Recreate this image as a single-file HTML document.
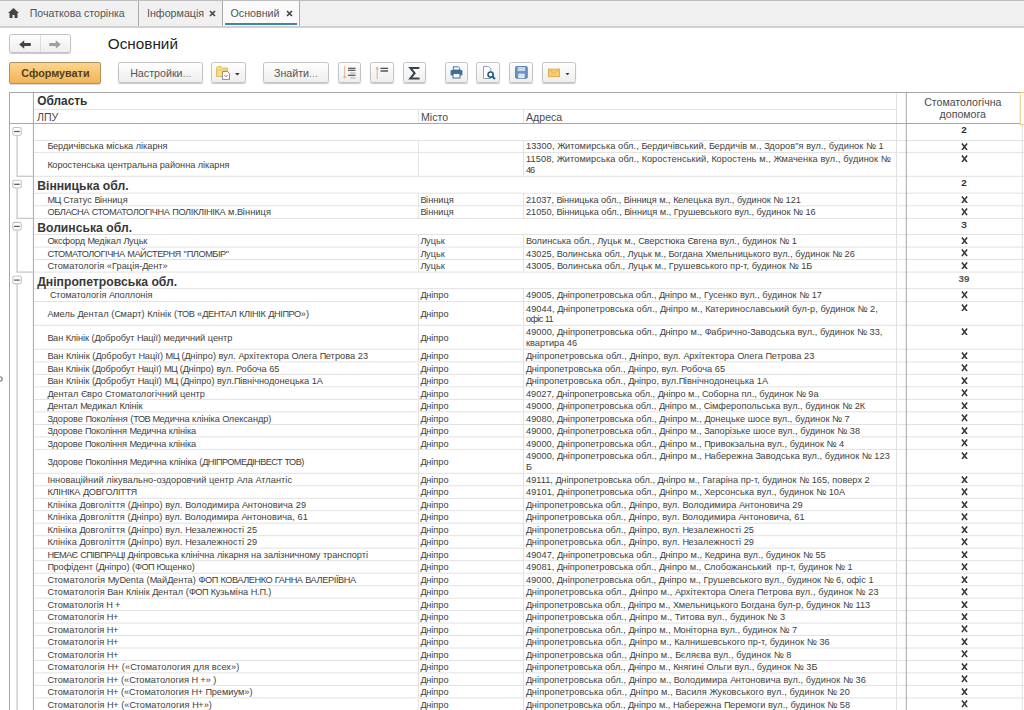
<!DOCTYPE html>
<html><head><meta charset="utf-8"><style>
html,body{margin:0;padding:0;background:#fff;}
body{width:1024px;height:710px;overflow:hidden;position:relative;font-family:"Liberation Sans",sans-serif;}
body div{position:absolute;overflow:visible;white-space:nowrap;}
.btn{border:1px solid #c4c4c4;border-radius:2.5px;background:linear-gradient(#fefefe,#eeeeee);box-shadow:0 1px 1px rgba(0,0,0,0.22);box-sizing:border-box}
</style></head><body>
<div style="left:0;top:0;width:1024px;height:27.8px;background:#f0f0f0;border-top:1px solid #bdbdbd;border-bottom:2px solid #d0d0d0;box-sizing:border-box"></div>
<div style="left:221.7px;top:1px;width:77.7px;height:24.8px;background:#fafafa"></div>
<div style="left:138px;top:1px;width:1px;height:25px;background:#ababab"></div>
<div style="left:221.5px;top:1px;width:1px;height:25px;background:#ababab"></div>
<div style="left:299px;top:1px;width:1px;height:25px;background:#ababab"></div>
<div style="left:225px;top:23.2px;width:71.5px;height:1.8px;background:#3f87a8"></div>
<div style="left:29.7px;top:5.2px;font-size:10.6px;line-height:16px;color:#555">Початкова сторінка</div>
<div style="left:147px;top:5.2px;font-size:10.7px;line-height:16px;color:#555">Інформація</div>
<div style="left:230.5px;top:5.2px;font-size:10.7px;line-height:16px;color:#555">Основний</div>
<svg style="position:absolute;left:8.2px;top:7.6px" width="11" height="10" viewBox="0 0 11 10"><path d="M5.5 0 L11 5 L9.5 5 L9.5 10 L6.5 10 L6.5 7 L4.5 7 L4.5 10 L1.5 10 L1.5 5 L0 5 Z" fill="#444"/></svg>
<svg style="position:absolute;left:208.8px;top:9.5px" width="7" height="7" viewBox="0 0 7 7"><path d="M1 1 L6 6 M6 1 L1 6" stroke="#444" stroke-width="1.6"/></svg>
<svg style="position:absolute;left:285.8px;top:9.5px" width="7" height="7" viewBox="0 0 7 7"><path d="M1 1 L6 6 M6 1 L1 6" stroke="#444" stroke-width="1.6"/></svg>

<div style="left:107.8px;top:34.8px;font-size:15.3px;line-height:18px;color:#1e1e1e">Основний</div>

<div class="btn" style="left:9.4px;top:34.4px;width:61.3px;height:19.1px"></div>
<div style="left:40.2px;top:35.4px;width:1px;height:17.1px;background:#dedede"></div>
<svg style="position:absolute;left:19px;top:40px" width="12" height="9" viewBox="0 0 12 9"><path d="M0.2 4.5 L5.2 0.2 L5.2 3.1 L11.8 3.1 L11.8 5.9 L5.2 5.9 L5.2 8.8 Z" fill="#444"/></svg>
<svg style="position:absolute;left:49px;top:40px" width="12" height="9" viewBox="0 0 12 9"><path d="M11.8 4.5 L6.8 0.2 L6.8 3.1 L0.2 3.1 L0.2 5.9 L6.8 5.9 L6.8 8.8 Z" fill="#a0a0a0"/></svg>

<div style="left:9.4px;top:62.2px;width:92px;height:21.5px;border:1px solid #b0925c;border-radius:2px;background:linear-gradient(#fdd48e,#f0b456);box-shadow:0 1px 1px rgba(0,0,0,0.15);box-sizing:border-box"></div>
<div style="left:9.4px;top:62.2px;width:92px;height:21.5px;font-weight:bold;font-size:10.8px;line-height:23.5px;color:#54401a;text-align:center">Сформувати</div>

<div class="btn" style="left:118.3px;top:62.3px;width:85px;height:21.2px;font-size:10.7px;line-height:20px;color:#555;text-align:center">Настройки<span style="color:#8a8a8a">...</span></div>
<div class="btn" style="left:210.5px;top:62.3px;width:35.2px;height:21.2px"></div>
<div class="btn" style="left:262.6px;top:62.3px;width:66.8px;height:21.2px;font-size:10.7px;line-height:20px;color:#555;text-align:center">Знайти<span style="color:#8a8a8a">...</span></div>
<div class="btn" style="left:337.6px;top:62.3px;width:23.7px;height:21.2px"></div>
<div class="btn" style="left:370.2px;top:62.3px;width:24.1px;height:21.2px"></div>
<div class="btn" style="left:402.5px;top:62.3px;width:23.8px;height:21.2px"></div>
<div class="btn" style="left:444.5px;top:62.3px;width:23.9px;height:21.2px"></div>
<div class="btn" style="left:476.4px;top:62.3px;width:23.8px;height:21.2px"></div>
<div class="btn" style="left:508.9px;top:62.3px;width:23.9px;height:21.2px"></div>
<div class="btn" style="left:541.6px;top:62.3px;width:34px;height:21.2px"></div>

<!-- report options icon -->
<svg style="position:absolute;left:215px;top:65px" width="28" height="16" viewBox="0 0 28 16">
<path d="M1.5 3.5 Q1.5 1.5 3.5 1.5 L6 1.5 L7.5 3 L12.5 3 L12.5 11.5 L1.5 11.5 Z" fill="#f7dc83" stroke="#e2bd55" stroke-width="1"/>
<path d="M1.5 5 L12.5 5" stroke="#e9c867" stroke-width="1"/>
<path d="M7.5 6.5 L12.5 6.5 L14.5 8.5 L14.5 14.5 L7.5 14.5 Z" fill="#fff" stroke="#7d8796" stroke-width="0.9"/>
<path d="M9.5 10 L11 11.8 L12.5 10" stroke="#d46a5a" stroke-width="1" fill="none"/>
<path d="M20 8 L24.6 8 L22.3 10.5 Z" fill="#333"/>
</svg>
<!-- sort desc -->
<svg style="position:absolute;left:341px;top:65px" width="18" height="16" viewBox="0 0 18 16">
<path d="M3.7 1 L3.7 12" stroke="#eab08e" stroke-width="1"/>
<path d="M1.9 11 L3.7 14 L5.5 11 Z" fill="#eab08e"/>
<path d="M7 3.3 L14.5 3.3 M7 5.2 L14.5 5.2 M7 10.3 L14.5 10.3" stroke="#333" stroke-width="1.1"/>
<path d="M9 8 L14.5 8 M9 13 L14.5 13" stroke="#aaa" stroke-width="1"/>
</svg>
<!-- sort asc -->
<svg style="position:absolute;left:373px;top:65px" width="18" height="16" viewBox="0 0 18 16">
<path d="M4.2 3 L4.2 14" stroke="#e4ab88" stroke-width="1"/>
<path d="M2.4 4.2 L4.2 1.2 L6 4.2 Z" fill="#e4ab88"/>
<path d="M7.5 3.3 L15 3.3" stroke="#333" stroke-width="1.1"/>
<path d="M7.5 6 L15 6" stroke="#555" stroke-width="1.5"/>
</svg>
<!-- sigma -->
<svg style="position:absolute;left:407px;top:65px" width="14" height="16" viewBox="0 0 14 16">
<path d="M11.6 3.6 L11.6 2.9 L3.3 2.9 L7.6 8.2 L3.3 13.4 L11.6 13.4 L11.6 12.7" stroke="#38424d" stroke-width="2" fill="none" stroke-linejoin="miter"/>
</svg>
<!-- printer -->
<svg style="position:absolute;left:449.8px;top:66.2px" width="13" height="13" viewBox="0 0 13 13">
<path d="M3.3 0.8 L8.3 0.8 L9.8 2.2 L9.8 4 L3.3 4 Z" fill="#fff" stroke="#3f6f96" stroke-width="1"/>
<rect x="0.6" y="4" width="11.8" height="5.6" rx="1.1" fill="#3f6f96"/>
<rect x="3" y="7.6" width="7" height="4.4" fill="#fff" stroke="#3f6f96" stroke-width="1"/>
</svg>
<!-- preview -->
<svg style="position:absolute;left:482px;top:65px" width="15" height="15" viewBox="0 0 15 15">
<path d="M1.5 1.5 L6.5 1.5 L8.8 3.8 L8.8 13.5 L1.5 13.5 Z" fill="#fff" stroke="#8a96a6" stroke-width="0.9"/>
<circle cx="8.6" cy="9.6" r="2.6" fill="#fff" stroke="#1f5c7d" stroke-width="1.6"/>
<path d="M10.4 11.5 L13 14" stroke="#1f5c7d" stroke-width="2"/>
</svg>
<!-- floppy -->
<svg style="position:absolute;left:514.5px;top:66.3px" width="13" height="13" viewBox="0 0 13 13">
<rect x="0.5" y="0.5" width="11.8" height="11.8" rx="1" fill="#6a93bf" stroke="#4f78a6" stroke-width="0.8"/>
<rect x="2.6" y="1.1" width="7.6" height="4" fill="#c9d9ea"/>
<rect x="3.2" y="7.6" width="6.4" height="4.4" fill="#dbe6f1"/>
</svg>
<!-- mail -->
<svg style="position:absolute;left:546px;top:66px" width="28" height="13" viewBox="0 0 28 13">
<rect x="2.4" y="3.1" width="11" height="7.6" fill="#f5cd6a" stroke="#dba94a" stroke-width="0.9"/>
<path d="M2.7 3.4 L7.9 7.4 L13.1 3.4" stroke="#e2b154" stroke-width="0.9" fill="none"/>
<path d="M19.5 7 L23.5 7 L21.5 9.2 Z" fill="#333"/>
</svg>

<div style="left:1020.30px;top:92.50px;width:5.70px;height:32.50px;background:#fffdf8"></div>
<svg style="position:absolute;left:0;top:0" width="1024" height="710" viewBox="0 0 1024 710"><path d="M33.40 140.50H1024.00" stroke="#e2e2e2" stroke-width="1.0"/><path d="M418.40 140.50V152.40" stroke="#e2e2e2" stroke-width="1.0"/><path d="M523.50 140.50V152.40" stroke="#e2e2e2" stroke-width="1.0"/><path d="M33.40 152.40H1024.00" stroke="#e2e2e2" stroke-width="1.0"/><path d="M418.40 152.40V176.30" stroke="#e2e2e2" stroke-width="1.0"/><path d="M523.50 152.40V176.30" stroke="#e2e2e2" stroke-width="1.0"/><path d="M33.40 176.30H1024.00" stroke="#e2e2e2" stroke-width="1.0"/><path d="M33.40 193.20H1024.00" stroke="#e2e2e2" stroke-width="1.0"/><path d="M418.40 193.20V205.80" stroke="#e2e2e2" stroke-width="1.0"/><path d="M523.50 193.20V205.80" stroke="#e2e2e2" stroke-width="1.0"/><path d="M33.40 205.80H1024.00" stroke="#e2e2e2" stroke-width="1.0"/><path d="M418.40 205.80V218.40" stroke="#e2e2e2" stroke-width="1.0"/><path d="M523.50 205.80V218.40" stroke="#e2e2e2" stroke-width="1.0"/><path d="M33.40 218.40H1024.00" stroke="#e2e2e2" stroke-width="1.0"/><path d="M33.40 234.50H1024.00" stroke="#e2e2e2" stroke-width="1.0"/><path d="M418.40 234.50V247.10" stroke="#e2e2e2" stroke-width="1.0"/><path d="M523.50 234.50V247.10" stroke="#e2e2e2" stroke-width="1.0"/><path d="M33.40 247.10H1024.00" stroke="#e2e2e2" stroke-width="1.0"/><path d="M418.40 247.10V259.50" stroke="#e2e2e2" stroke-width="1.0"/><path d="M523.50 247.10V259.50" stroke="#e2e2e2" stroke-width="1.0"/><path d="M33.40 259.50H1024.00" stroke="#e2e2e2" stroke-width="1.0"/><path d="M418.40 259.50V272.10" stroke="#e2e2e2" stroke-width="1.0"/><path d="M523.50 259.50V272.10" stroke="#e2e2e2" stroke-width="1.0"/><path d="M33.40 272.10H1024.00" stroke="#e2e2e2" stroke-width="1.0"/><path d="M33.40 288.70H1024.00" stroke="#e2e2e2" stroke-width="1.0"/><path d="M418.40 288.70V301.60" stroke="#e2e2e2" stroke-width="1.0"/><path d="M523.50 288.70V301.60" stroke="#e2e2e2" stroke-width="1.0"/><path d="M33.40 301.60H1024.00" stroke="#e2e2e2" stroke-width="1.0"/><path d="M418.40 301.60V325.30" stroke="#e2e2e2" stroke-width="1.0"/><path d="M523.50 301.60V325.30" stroke="#e2e2e2" stroke-width="1.0"/><path d="M33.40 325.30H1024.00" stroke="#e2e2e2" stroke-width="1.0"/><path d="M418.40 325.30V349.20" stroke="#e2e2e2" stroke-width="1.0"/><path d="M523.50 325.30V349.20" stroke="#e2e2e2" stroke-width="1.0"/><path d="M33.40 349.20H1024.00" stroke="#e2e2e2" stroke-width="1.0"/><path d="M418.40 349.20V361.90" stroke="#e2e2e2" stroke-width="1.0"/><path d="M523.50 349.20V361.90" stroke="#e2e2e2" stroke-width="1.0"/><path d="M33.40 361.90H1024.00" stroke="#e2e2e2" stroke-width="1.0"/><path d="M418.40 361.90V374.40" stroke="#e2e2e2" stroke-width="1.0"/><path d="M523.50 361.90V374.40" stroke="#e2e2e2" stroke-width="1.0"/><path d="M33.40 374.40H1024.00" stroke="#e2e2e2" stroke-width="1.0"/><path d="M418.40 374.40V386.90" stroke="#e2e2e2" stroke-width="1.0"/><path d="M523.50 374.40V386.90" stroke="#e2e2e2" stroke-width="1.0"/><path d="M33.40 386.90H1024.00" stroke="#e2e2e2" stroke-width="1.0"/><path d="M418.40 386.90V399.40" stroke="#e2e2e2" stroke-width="1.0"/><path d="M523.50 386.90V399.40" stroke="#e2e2e2" stroke-width="1.0"/><path d="M33.40 399.40H1024.00" stroke="#e2e2e2" stroke-width="1.0"/><path d="M418.40 399.40V411.90" stroke="#e2e2e2" stroke-width="1.0"/><path d="M523.50 399.40V411.90" stroke="#e2e2e2" stroke-width="1.0"/><path d="M33.40 411.90H1024.00" stroke="#e2e2e2" stroke-width="1.0"/><path d="M418.40 411.90V424.50" stroke="#e2e2e2" stroke-width="1.0"/><path d="M523.50 411.90V424.50" stroke="#e2e2e2" stroke-width="1.0"/><path d="M33.40 424.50H1024.00" stroke="#e2e2e2" stroke-width="1.0"/><path d="M418.40 424.50V436.90" stroke="#e2e2e2" stroke-width="1.0"/><path d="M523.50 424.50V436.90" stroke="#e2e2e2" stroke-width="1.0"/><path d="M33.40 436.90H1024.00" stroke="#e2e2e2" stroke-width="1.0"/><path d="M418.40 436.90V449.40" stroke="#e2e2e2" stroke-width="1.0"/><path d="M523.50 436.90V449.40" stroke="#e2e2e2" stroke-width="1.0"/><path d="M33.40 449.40H1024.00" stroke="#e2e2e2" stroke-width="1.0"/><path d="M418.40 449.40V473.30" stroke="#e2e2e2" stroke-width="1.0"/><path d="M523.50 449.40V473.30" stroke="#e2e2e2" stroke-width="1.0"/><path d="M33.40 473.30H1024.00" stroke="#e2e2e2" stroke-width="1.0"/><path d="M418.40 473.30V485.80" stroke="#e2e2e2" stroke-width="1.0"/><path d="M523.50 473.30V485.80" stroke="#e2e2e2" stroke-width="1.0"/><path d="M33.40 485.80H1024.00" stroke="#e2e2e2" stroke-width="1.0"/><path d="M418.40 485.80V498.30" stroke="#e2e2e2" stroke-width="1.0"/><path d="M523.50 485.80V498.30" stroke="#e2e2e2" stroke-width="1.0"/><path d="M33.40 498.30H1024.00" stroke="#e2e2e2" stroke-width="1.0"/><path d="M418.40 498.30V510.70" stroke="#e2e2e2" stroke-width="1.0"/><path d="M523.50 498.30V510.70" stroke="#e2e2e2" stroke-width="1.0"/><path d="M33.40 510.70H1024.00" stroke="#e2e2e2" stroke-width="1.0"/><path d="M418.40 510.70V523.20" stroke="#e2e2e2" stroke-width="1.0"/><path d="M523.50 510.70V523.20" stroke="#e2e2e2" stroke-width="1.0"/><path d="M33.40 523.20H1024.00" stroke="#e2e2e2" stroke-width="1.0"/><path d="M418.40 523.20V535.70" stroke="#e2e2e2" stroke-width="1.0"/><path d="M523.50 523.20V535.70" stroke="#e2e2e2" stroke-width="1.0"/><path d="M33.40 535.70H1024.00" stroke="#e2e2e2" stroke-width="1.0"/><path d="M418.40 535.70V548.20" stroke="#e2e2e2" stroke-width="1.0"/><path d="M523.50 535.70V548.20" stroke="#e2e2e2" stroke-width="1.0"/><path d="M33.40 548.20H1024.00" stroke="#e2e2e2" stroke-width="1.0"/><path d="M418.40 548.20V560.70" stroke="#e2e2e2" stroke-width="1.0"/><path d="M523.50 548.20V560.70" stroke="#e2e2e2" stroke-width="1.0"/><path d="M33.40 560.70H1024.00" stroke="#e2e2e2" stroke-width="1.0"/><path d="M418.40 560.70V573.20" stroke="#e2e2e2" stroke-width="1.0"/><path d="M523.50 560.70V573.20" stroke="#e2e2e2" stroke-width="1.0"/><path d="M33.40 573.20H1024.00" stroke="#e2e2e2" stroke-width="1.0"/><path d="M418.40 573.20V585.70" stroke="#e2e2e2" stroke-width="1.0"/><path d="M523.50 573.20V585.70" stroke="#e2e2e2" stroke-width="1.0"/><path d="M33.40 585.70H1024.00" stroke="#e2e2e2" stroke-width="1.0"/><path d="M418.40 585.70V598.20" stroke="#e2e2e2" stroke-width="1.0"/><path d="M523.50 585.70V598.20" stroke="#e2e2e2" stroke-width="1.0"/><path d="M33.40 598.20H1024.00" stroke="#e2e2e2" stroke-width="1.0"/><path d="M418.40 598.20V610.60" stroke="#e2e2e2" stroke-width="1.0"/><path d="M523.50 598.20V610.60" stroke="#e2e2e2" stroke-width="1.0"/><path d="M33.40 610.60H1024.00" stroke="#e2e2e2" stroke-width="1.0"/><path d="M418.40 610.60V623.10" stroke="#e2e2e2" stroke-width="1.0"/><path d="M523.50 610.60V623.10" stroke="#e2e2e2" stroke-width="1.0"/><path d="M33.40 623.10H1024.00" stroke="#e2e2e2" stroke-width="1.0"/><path d="M418.40 623.10V635.50" stroke="#e2e2e2" stroke-width="1.0"/><path d="M523.50 623.10V635.50" stroke="#e2e2e2" stroke-width="1.0"/><path d="M33.40 635.50H1024.00" stroke="#e2e2e2" stroke-width="1.0"/><path d="M418.40 635.50V648.00" stroke="#e2e2e2" stroke-width="1.0"/><path d="M523.50 635.50V648.00" stroke="#e2e2e2" stroke-width="1.0"/><path d="M33.40 648.00H1024.00" stroke="#e2e2e2" stroke-width="1.0"/><path d="M418.40 648.00V660.40" stroke="#e2e2e2" stroke-width="1.0"/><path d="M523.50 648.00V660.40" stroke="#e2e2e2" stroke-width="1.0"/><path d="M33.40 660.40H1024.00" stroke="#e2e2e2" stroke-width="1.0"/><path d="M418.40 660.40V672.90" stroke="#e2e2e2" stroke-width="1.0"/><path d="M523.50 660.40V672.90" stroke="#e2e2e2" stroke-width="1.0"/><path d="M33.40 672.90H1024.00" stroke="#e2e2e2" stroke-width="1.0"/><path d="M418.40 672.90V685.40" stroke="#e2e2e2" stroke-width="1.0"/><path d="M523.50 672.90V685.40" stroke="#e2e2e2" stroke-width="1.0"/><path d="M33.40 685.40H1024.00" stroke="#e2e2e2" stroke-width="1.0"/><path d="M418.40 685.40V697.90" stroke="#e2e2e2" stroke-width="1.0"/><path d="M523.50 685.40V697.90" stroke="#e2e2e2" stroke-width="1.0"/><path d="M33.40 697.90H1024.00" stroke="#e2e2e2" stroke-width="1.0"/><path d="M418.40 697.90V710.40" stroke="#e2e2e2" stroke-width="1.0"/><path d="M523.50 697.90V710.40" stroke="#e2e2e2" stroke-width="1.0"/><path d="M896.50 92.50V712.00" stroke="#e2e2e2" stroke-width="1.0"/><path d="M1022.30 123.50V712.00" stroke="#e2e2e2" stroke-width="1.0"/><path d="M418.40 109.40V123.50" stroke="#e2e2e2" stroke-width="1.0"/><path d="M523.50 109.40V123.50" stroke="#e2e2e2" stroke-width="1.0"/><path d="M33.40 109.40H896.50" stroke="#e2e2e2" stroke-width="1.0"/><path d="M9.50 92.50H1020.30" stroke="#a6a6a6" stroke-width="1.0"/><path d="M9.50 123.50H1020.30" stroke="#a6a6a6" stroke-width="1.0"/><path d="M9.50 92.00V712.00" stroke="#a6a6a6" stroke-width="1.0"/><path d="M33.40 92.50V712.00" stroke="#a6a6a6" stroke-width="1.0"/><path d="M906.30 92.50V712.00" stroke="#a6a6a6" stroke-width="1.0"/><rect x="1020.30" y="92.50" width="10" height="32.20" fill="none" stroke="#efc98a" stroke-width="1"/><path d="M17.10 135.80V176.30" stroke="#cbcbcb" stroke-width="1.4"/><path d="M16.40 176.30H33.40" stroke="#cbcbcb" stroke-width="1.4"/><rect x="12.85" y="127.45" width="8.4" height="7.8" rx="1.8" fill="#fff" stroke="#c2c2c2" stroke-width="1.1"/><path d="M14.10 131.50H19.80" stroke="#5f5f5f" stroke-width="1.3"/><path d="M17.10 188.60V218.40" stroke="#cbcbcb" stroke-width="1.4"/><path d="M16.40 218.40H33.40" stroke="#cbcbcb" stroke-width="1.4"/><rect x="12.85" y="180.25" width="8.4" height="7.8" rx="1.8" fill="#fff" stroke="#c2c2c2" stroke-width="1.1"/><path d="M14.10 184.30H19.80" stroke="#5f5f5f" stroke-width="1.3"/><path d="M17.10 230.70V272.10" stroke="#cbcbcb" stroke-width="1.4"/><path d="M16.40 272.10H33.40" stroke="#cbcbcb" stroke-width="1.4"/><rect x="12.85" y="222.35" width="8.4" height="7.8" rx="1.8" fill="#fff" stroke="#c2c2c2" stroke-width="1.1"/><path d="M14.10 226.40H19.80" stroke="#5f5f5f" stroke-width="1.3"/><path d="M17.10 284.40V760.00" stroke="#cbcbcb" stroke-width="1.4"/><path d="M16.40 760.00H33.40" stroke="#cbcbcb" stroke-width="1.4"/><rect x="12.85" y="276.05" width="8.4" height="7.8" rx="1.8" fill="#fff" stroke="#c2c2c2" stroke-width="1.1"/><path d="M14.10 280.10H19.80" stroke="#5f5f5f" stroke-width="1.3"/><circle cx="0" cy="379" r="2.1" fill="none" stroke="#8a8a8a" stroke-width="1.4"/></svg>
<div style="left:906.90px;top:124.10px;width:114.00px;height:12.00px;text-align:center;font-size:9.9px;line-height:12px;font-weight:bold;color:#2e2e2e">2</div>
<div style="left:47.50px;top:141.10px;width:400.00px;height:11.90px;font-size:9.2px;color:#3e3e3e;-webkit-text-stroke:0.0px #3e3e3e;white-space:pre;line-height:11.90px"><span style="letter-spacing:-0.535px">Б</span><span style="letter-spacing:-0.013px">ердичівська міська лікарня</span></div>
<div style="left:526.00px;top:141.10px;width:370.00px;height:11.90px;font-size:9.2px;color:#3e3e3e;-webkit-text-stroke:0.0px #3e3e3e;white-space:pre;line-height:11.90px"><span style="letter-spacing:0.074px">13300, </span><span style="letter-spacing:-0.656px">Ж</span><span style="letter-spacing:0.074px">итомирська обл., </span><span style="letter-spacing:-0.448px">Б</span><span style="letter-spacing:0.074px">ердичівський, </span><span style="letter-spacing:-0.448px">Б</span><span style="letter-spacing:0.073px">ердичів м., </span><span style="letter-spacing:-0.407px">З</span><span style="letter-spacing:0.074px">доров"я вул., будинок № 1</span></div>
<svg style="position:absolute;left:961.00px;top:142.80px" width="7" height="7.6" viewBox="0 0 7 7.6"><path d="M0.9 0.45 L6.1 7.15 M6.1 0.45 L0.9 7.15" stroke="#333" stroke-width="1.5"/></svg>
<div style="left:47.50px;top:153.80px;width:400.00px;height:23.90px;font-size:9.2px;color:#3e3e3e;-webkit-text-stroke:0.0px #3e3e3e;white-space:pre;line-height:23.90px"><span style="letter-spacing:-0.496px">К</span><span style="letter-spacing:-0.032px">оростенська центральна районна лікарня</span></div>
<div style="left:526.00px;top:154.30px;width:370.00px;height:23.90px;font-size:9.2px;color:#3e3e3e;-webkit-text-stroke:0.0px #3e3e3e;white-space:pre;line-height:10.6px"><span style="letter-spacing:0.119px">11508, </span><span style="letter-spacing:-0.611px">Ж</span><span style="letter-spacing:0.119px">итомирська обл., </span><span style="letter-spacing:-0.345px">К</span><span style="letter-spacing:0.119px">оростенський, </span><span style="letter-spacing:-0.345px">К</span><span style="letter-spacing:0.118px">оростень м., </span><span style="letter-spacing:-0.611px">Ж</span><span style="letter-spacing:0.119px">маченка вул., будинок №</span><br><span style="letter-spacing:-0.989px">46</span></div>
<svg style="position:absolute;left:961.00px;top:154.70px" width="7" height="7.6" viewBox="0 0 7 7.6"><path d="M0.9 0.45 L6.1 7.15 M6.1 0.45 L0.9 7.15" stroke="#333" stroke-width="1.5"/></svg>
<div style="left:37.20px;top:177.80px;width:800.00px;height:16.90px;font-weight:bold;font-size:12.2px;line-height:16.90px;color:#383838">Вінницька обл.</div>
<div style="left:906.90px;top:176.90px;width:114.00px;height:12.00px;text-align:center;font-size:9.9px;line-height:12px;font-weight:bold;color:#2e2e2e">2</div>
<div style="left:47.50px;top:193.80px;width:400.00px;height:12.60px;font-size:9.2px;color:#3e3e3e;-webkit-text-stroke:0.0px #3e3e3e;white-space:pre;line-height:12.60px"><span style="letter-spacing:-0.613px">МЦ</span><span style="letter-spacing:0.006px"> </span><span style="letter-spacing:-0.563px">С</span><span style="letter-spacing:0.009px">татус </span><span style="letter-spacing:-0.520px">В</span><span style="letter-spacing:0.010px">інниця</span></div>
<div style="left:420.50px;top:193.80px;width:100.00px;height:12.60px;font-size:9.2px;color:#3e3e3e;-webkit-text-stroke:0.0px #3e3e3e;white-space:pre;line-height:12.60px"><span style="letter-spacing:-0.520px">В</span><span style="letter-spacing:0.010px">інниця</span></div>
<div style="left:526.00px;top:193.80px;width:370.00px;height:12.60px;font-size:9.2px;color:#3e3e3e;-webkit-text-stroke:0.0px #3e3e3e;white-space:pre;line-height:12.60px"><span style="letter-spacing:-0.029px">21037, </span><span style="letter-spacing:-0.559px">В</span><span style="letter-spacing:-0.030px">інницька обл., </span><span style="letter-spacing:-0.559px">В</span><span style="letter-spacing:-0.030px">інниця м., </span><span style="letter-spacing:-0.493px">К</span><span style="letter-spacing:-0.029px">елецька вул., будинок № 121</span></div>
<svg style="position:absolute;left:961.00px;top:195.50px" width="7" height="7.6" viewBox="0 0 7 7.6"><path d="M0.9 0.45 L6.1 7.15 M6.1 0.45 L0.9 7.15" stroke="#333" stroke-width="1.5"/></svg>
<div style="left:47.50px;top:206.40px;width:400.00px;height:12.60px;font-size:9.2px;color:#3e3e3e;-webkit-text-stroke:0.0px #3e3e3e;white-space:pre;line-height:12.60px"><span style="letter-spacing:-0.436px">ОБЛАСНА</span><span style="letter-spacing:0.113px"> </span><span style="letter-spacing:-0.412px">СТОМАТОЛОГІЧНА</span><span style="letter-spacing:0.113px"> </span><span style="letter-spacing:-0.332px">ПОЛІКЛІНІКА</span><span style="letter-spacing:0.115px"> м.</span><span style="letter-spacing:-0.413px">В</span><span style="letter-spacing:0.117px">інниця</span></div>
<div style="left:420.50px;top:206.40px;width:100.00px;height:12.60px;font-size:9.2px;color:#3e3e3e;-webkit-text-stroke:0.0px #3e3e3e;white-space:pre;line-height:12.60px"><span style="letter-spacing:-0.520px">В</span><span style="letter-spacing:0.010px">інниця</span></div>
<div style="left:526.00px;top:206.40px;width:370.00px;height:12.60px;font-size:9.2px;color:#3e3e3e;-webkit-text-stroke:0.0px #3e3e3e;white-space:pre;line-height:12.60px"><span style="letter-spacing:-0.012px">21050, </span><span style="letter-spacing:-0.542px">В</span><span style="letter-spacing:-0.012px">інницька обл., </span><span style="letter-spacing:-0.542px">В</span><span style="letter-spacing:-0.013px">інниця м., </span><span style="letter-spacing:-0.444px">Г</span><span style="letter-spacing:-0.011px">рушевського вул., будинок № 16</span></div>
<svg style="position:absolute;left:961.00px;top:208.10px" width="7" height="7.6" viewBox="0 0 7 7.6"><path d="M0.9 0.45 L6.1 7.15 M6.1 0.45 L0.9 7.15" stroke="#333" stroke-width="1.5"/></svg>
<div style="left:37.20px;top:219.90px;width:800.00px;height:16.10px;font-weight:bold;font-size:12.2px;line-height:16.10px;color:#383838">Волинська обл.</div>
<div style="left:906.90px;top:219.00px;width:114.00px;height:12.00px;text-align:center;font-size:9.9px;line-height:12px;color:#333;-webkit-text-stroke:0.3px #333">3</div>
<div style="left:47.50px;top:235.10px;width:400.00px;height:12.60px;font-size:9.2px;color:#3e3e3e;-webkit-text-stroke:0.0px #3e3e3e;white-space:pre;line-height:12.60px"><span style="letter-spacing:-0.697px">О</span><span style="letter-spacing:-0.079px">ксфорд </span><span style="letter-spacing:-0.740px">М</span><span style="letter-spacing:-0.081px">едікал </span><span style="letter-spacing:-0.602px">Л</span><span style="letter-spacing:-0.080px">уцьк</span></div>
<div style="left:420.50px;top:235.10px;width:100.00px;height:12.60px;font-size:9.2px;color:#3e3e3e;-webkit-text-stroke:0.0px #3e3e3e;white-space:pre;line-height:12.60px"><span style="letter-spacing:-0.512px">Л</span><span style="letter-spacing:0.010px">уцьк</span></div>
<div style="left:526.00px;top:235.10px;width:370.00px;height:12.60px;font-size:9.2px;color:#3e3e3e;-webkit-text-stroke:0.0px #3e3e3e;white-space:pre;line-height:12.60px"><span style="letter-spacing:-0.480px">В</span><span style="letter-spacing:0.050px">олинська обл., </span><span style="letter-spacing:-0.471px">Л</span><span style="letter-spacing:0.049px">уцьк м., </span><span style="letter-spacing:-0.523px">С</span><span style="letter-spacing:0.051px">верстюка </span><span style="letter-spacing:-0.520px">Є</span><span style="letter-spacing:0.050px">вгена вул., будинок № 1</span></div>
<svg style="position:absolute;left:961.00px;top:236.80px" width="7" height="7.6" viewBox="0 0 7 7.6"><path d="M0.9 0.45 L6.1 7.15 M6.1 0.45 L0.9 7.15" stroke="#333" stroke-width="1.5"/></svg>
<div style="left:47.50px;top:247.70px;width:400.00px;height:12.40px;font-size:9.2px;color:#3e3e3e;-webkit-text-stroke:0.0px #3e3e3e;white-space:pre;line-height:12.40px"><span style="letter-spacing:-0.458px">СТОМАТОЛОГІЧНА</span><span style="letter-spacing:0.066px"> </span><span style="letter-spacing:-0.488px">МАЙСТЕРНЯ</span><span style="letter-spacing:0.067px"> "</span><span style="letter-spacing:-0.451px">ПЛОМБІР</span><span style="letter-spacing:0.068px">"</span></div>
<div style="left:420.50px;top:247.70px;width:100.00px;height:12.40px;font-size:9.2px;color:#3e3e3e;-webkit-text-stroke:0.0px #3e3e3e;white-space:pre;line-height:12.40px"><span style="letter-spacing:-0.512px">Л</span><span style="letter-spacing:0.010px">уцьк</span></div>
<div style="left:526.00px;top:247.70px;width:370.00px;height:12.40px;font-size:9.2px;color:#3e3e3e;-webkit-text-stroke:0.0px #3e3e3e;white-space:pre;line-height:12.40px"><span style="letter-spacing:0.026px">43025, </span><span style="letter-spacing:-0.504px">В</span><span style="letter-spacing:0.026px">олинська обл., </span><span style="letter-spacing:-0.495px">Л</span><span style="letter-spacing:0.025px">уцьк м., </span><span style="letter-spacing:-0.495px">Б</span><span style="letter-spacing:0.027px">огдана </span><span style="letter-spacing:-0.504px">Х</span><span style="letter-spacing:0.027px">мельницького вул., будинок № 26</span></div>
<svg style="position:absolute;left:961.00px;top:249.40px" width="7" height="7.6" viewBox="0 0 7 7.6"><path d="M0.9 0.45 L6.1 7.15 M6.1 0.45 L0.9 7.15" stroke="#333" stroke-width="1.5"/></svg>
<div style="left:47.50px;top:260.10px;width:400.00px;height:12.60px;font-size:9.2px;color:#3e3e3e;-webkit-text-stroke:0.0px #3e3e3e;white-space:pre;line-height:12.60px"><span style="letter-spacing:-0.547px">С</span><span style="letter-spacing:0.026px">томатологія «</span><span style="letter-spacing:-0.406px">Г</span><span style="letter-spacing:0.025px">рація-</span><span style="letter-spacing:-0.512px">Д</span><span style="letter-spacing:0.027px">ент»</span></div>
<div style="left:420.50px;top:260.10px;width:100.00px;height:12.60px;font-size:9.2px;color:#3e3e3e;-webkit-text-stroke:0.0px #3e3e3e;white-space:pre;line-height:12.60px"><span style="letter-spacing:-0.512px">Л</span><span style="letter-spacing:0.010px">уцьк</span></div>
<div style="left:526.00px;top:260.10px;width:370.00px;height:12.60px;font-size:9.2px;color:#3e3e3e;-webkit-text-stroke:0.0px #3e3e3e;white-space:pre;line-height:12.60px"><span style="letter-spacing:0.035px">43005, </span><span style="letter-spacing:-0.495px">В</span><span style="letter-spacing:0.035px">олинська обл., </span><span style="letter-spacing:-0.486px">Л</span><span style="letter-spacing:0.034px">уцьк м., </span><span style="letter-spacing:-0.397px">Г</span><span style="letter-spacing:0.035px">рушевського пр-т, будинок № 1</span><span style="letter-spacing:-0.486px">Б</span></div>
<svg style="position:absolute;left:961.00px;top:261.80px" width="7" height="7.6" viewBox="0 0 7 7.6"><path d="M0.9 0.45 L6.1 7.15 M6.1 0.45 L0.9 7.15" stroke="#333" stroke-width="1.5"/></svg>
<div style="left:37.20px;top:273.60px;width:800.00px;height:16.60px;font-weight:bold;font-size:12.2px;line-height:16.60px;color:#383838">Дніпропетровська обл.</div>
<div style="left:906.90px;top:272.70px;width:114.00px;height:12.00px;text-align:center;font-size:9.9px;line-height:12px;font-weight:bold;color:#555">39</div>
<div style="left:47.50px;top:289.30px;width:400.00px;height:12.90px;font-size:9.2px;color:#3e3e3e;-webkit-text-stroke:0.0px #3e3e3e;white-space:pre;line-height:12.90px"><span style="letter-spacing:-0.013px"> </span><span style="letter-spacing:-0.581px">С</span><span style="letter-spacing:-0.008px">томатологія </span><span style="letter-spacing:-0.538px">А</span><span style="letter-spacing:-0.008px">поллонія</span></div>
<div style="left:420.50px;top:289.30px;width:100.00px;height:12.90px;font-size:9.2px;color:#3e3e3e;-webkit-text-stroke:0.0px #3e3e3e;white-space:pre;line-height:12.90px"><span style="letter-spacing:-0.528px">Д</span><span style="letter-spacing:0.010px">ніпро</span></div>
<div style="left:526.00px;top:289.30px;width:370.00px;height:12.90px;font-size:9.2px;color:#3e3e3e;-webkit-text-stroke:0.0px #3e3e3e;white-space:pre;line-height:12.90px"><span style="letter-spacing:0.040px">49005, </span><span style="letter-spacing:-0.498px">Д</span><span style="letter-spacing:0.040px">ніпропетровська обл., </span><span style="letter-spacing:-0.498px">Д</span><span style="letter-spacing:0.039px">ніпро м., </span><span style="letter-spacing:-0.392px">Г</span><span style="letter-spacing:0.040px">усенко вул., будинок № 17</span></div>
<svg style="position:absolute;left:961.00px;top:291.00px" width="7" height="7.6" viewBox="0 0 7 7.6"><path d="M0.9 0.45 L6.1 7.15 M6.1 0.45 L0.9 7.15" stroke="#333" stroke-width="1.5"/></svg>
<div style="left:47.50px;top:303.00px;width:400.00px;height:23.70px;font-size:9.2px;color:#3e3e3e;-webkit-text-stroke:0.0px #3e3e3e;white-space:pre;line-height:23.70px"><span style="letter-spacing:-0.429px">А</span><span style="letter-spacing:0.101px">мель </span><span style="letter-spacing:-0.437px">Д</span><span style="letter-spacing:0.100px">ентал (</span><span style="letter-spacing:-0.472px">С</span><span style="letter-spacing:0.100px">март) </span><span style="letter-spacing:-0.363px">К</span><span style="letter-spacing:0.098px">лінік (</span><span style="letter-spacing:-0.444px">ТОВ</span><span style="letter-spacing:0.099px"> «</span><span style="letter-spacing:-0.429px">ДЕНТАЛ</span><span style="letter-spacing:0.096px"> </span><span style="letter-spacing:-0.312px">КЛІНІК</span><span style="letter-spacing:0.096px"> </span><span style="letter-spacing:-0.408px">ДНІПРО</span><span style="letter-spacing:0.100px">»)</span></div>
<div style="left:420.50px;top:303.00px;width:100.00px;height:23.70px;font-size:9.2px;color:#3e3e3e;-webkit-text-stroke:0.0px #3e3e3e;white-space:pre;line-height:23.70px"><span style="letter-spacing:-0.528px">Д</span><span style="letter-spacing:0.010px">ніпро</span></div>
<div style="left:526.00px;top:303.50px;width:370.00px;height:23.70px;font-size:9.2px;color:#3e3e3e;-webkit-text-stroke:0.0px #3e3e3e;white-space:pre;line-height:10.6px"><span style="letter-spacing:0.067px">49044, </span><span style="letter-spacing:-0.471px">Д</span><span style="letter-spacing:0.067px">ніпропетровська обл., </span><span style="letter-spacing:-0.471px">Д</span><span style="letter-spacing:0.066px">ніпро м., </span><span style="letter-spacing:-0.397px">К</span><span style="letter-spacing:0.067px">атеринославський бул-р, будинок № 2,</span><br><span style="letter-spacing:-0.623px">офіс 11</span></div>
<svg style="position:absolute;left:961.00px;top:303.90px" width="7" height="7.6" viewBox="0 0 7 7.6"><path d="M0.9 0.45 L6.1 7.15 M6.1 0.45 L0.9 7.15" stroke="#333" stroke-width="1.5"/></svg>
<div style="left:47.50px;top:326.70px;width:400.00px;height:23.90px;font-size:9.2px;color:#3e3e3e;-webkit-text-stroke:0.0px #3e3e3e;white-space:pre;line-height:23.90px"><span style="letter-spacing:-0.554px">В</span><span style="letter-spacing:-0.025px">ан </span><span style="letter-spacing:-0.489px">К</span><span style="letter-spacing:-0.027px">лінік (</span><span style="letter-spacing:-0.562px">Д</span><span style="letter-spacing:-0.024px">обробут </span><span style="letter-spacing:-0.597px">Н</span><span style="letter-spacing:-0.024px">ації) медичний центр</span></div>
<div style="left:420.50px;top:326.70px;width:100.00px;height:23.90px;font-size:9.2px;color:#3e3e3e;-webkit-text-stroke:0.0px #3e3e3e;white-space:pre;line-height:23.90px"><span style="letter-spacing:-0.528px">Д</span><span style="letter-spacing:0.010px">ніпро</span></div>
<div style="left:526.00px;top:327.20px;width:370.00px;height:23.90px;font-size:9.2px;color:#3e3e3e;-webkit-text-stroke:0.0px #3e3e3e;white-space:pre;line-height:10.6px"><span style="letter-spacing:0.058px">49000, </span><span style="letter-spacing:-0.480px">Д</span><span style="letter-spacing:0.058px">ніпропетровська обл., </span><span style="letter-spacing:-0.480px">Д</span><span style="letter-spacing:0.057px">ніпро м., </span><span style="letter-spacing:-0.544px">Ф</span><span style="letter-spacing:0.059px">абрично-</span><span style="letter-spacing:-0.422px">З</span><span style="letter-spacing:0.059px">аводська вул., будинок № 33,</span><br><span style="letter-spacing:-0.010px">квартира 46</span></div>
<svg style="position:absolute;left:961.00px;top:327.60px" width="7" height="7.6" viewBox="0 0 7 7.6"><path d="M0.9 0.45 L6.1 7.15 M6.1 0.45 L0.9 7.15" stroke="#333" stroke-width="1.5"/></svg>
<div style="left:47.50px;top:349.80px;width:400.00px;height:12.70px;font-size:9.2px;color:#3e3e3e;-webkit-text-stroke:0.0px #3e3e3e;white-space:pre;line-height:12.70px"><span style="letter-spacing:-0.481px">В</span><span style="letter-spacing:0.048px">ан </span><span style="letter-spacing:-0.415px">К</span><span style="letter-spacing:0.046px">лінік (</span><span style="letter-spacing:-0.489px">Д</span><span style="letter-spacing:0.049px">обробут </span><span style="letter-spacing:-0.524px">Н</span><span style="letter-spacing:0.046px">ації) </span><span style="letter-spacing:-0.574px">МЦ</span><span style="letter-spacing:0.045px"> (</span><span style="letter-spacing:-0.489px">Д</span><span style="letter-spacing:0.048px">ніпро) вул. </span><span style="letter-spacing:-0.481px">А</span><span style="letter-spacing:0.048px">рхітектора </span><span style="letter-spacing:-0.568px">О</span><span style="letter-spacing:0.048px">лега </span><span style="letter-spacing:-0.522px">П</span><span style="letter-spacing:0.049px">етрова 23</span></div>
<div style="left:420.50px;top:349.80px;width:100.00px;height:12.70px;font-size:9.2px;color:#3e3e3e;-webkit-text-stroke:0.0px #3e3e3e;white-space:pre;line-height:12.70px"><span style="letter-spacing:-0.528px">Д</span><span style="letter-spacing:0.010px">ніпро</span></div>
<div style="left:526.00px;top:349.80px;width:370.00px;height:12.70px;font-size:9.2px;color:#3e3e3e;-webkit-text-stroke:0.0px #3e3e3e;white-space:pre;line-height:12.70px"><span style="letter-spacing:-0.439px">Д</span><span style="letter-spacing:0.098px">ніпропетровська обл., </span><span style="letter-spacing:-0.439px">Д</span><span style="letter-spacing:0.097px">ніпро, вул. </span><span style="letter-spacing:-0.431px">А</span><span style="letter-spacing:0.098px">рхітектора </span><span style="letter-spacing:-0.518px">О</span><span style="letter-spacing:0.098px">лега </span><span style="letter-spacing:-0.472px">П</span><span style="letter-spacing:0.099px">етрова 23</span></div>
<svg style="position:absolute;left:961.00px;top:351.50px" width="7" height="7.6" viewBox="0 0 7 7.6"><path d="M0.9 0.45 L6.1 7.15 M6.1 0.45 L0.9 7.15" stroke="#333" stroke-width="1.5"/></svg>
<div style="left:47.50px;top:362.50px;width:400.00px;height:12.50px;font-size:9.2px;color:#3e3e3e;-webkit-text-stroke:0.0px #3e3e3e;white-space:pre;line-height:12.50px"><span style="letter-spacing:-0.535px">В</span><span style="letter-spacing:-0.006px">ан </span><span style="letter-spacing:-0.469px">К</span><span style="letter-spacing:-0.008px">лінік (</span><span style="letter-spacing:-0.543px">Д</span><span style="letter-spacing:-0.005px">обробут </span><span style="letter-spacing:-0.578px">Н</span><span style="letter-spacing:-0.008px">ації) </span><span style="letter-spacing:-0.628px">МЦ</span><span style="letter-spacing:-0.009px"> (</span><span style="letter-spacing:-0.543px">Д</span><span style="letter-spacing:-0.006px">ніпро) вул. </span><span style="letter-spacing:-0.535px">Р</span><span style="letter-spacing:-0.005px">обоча 65</span></div>
<div style="left:420.50px;top:362.50px;width:100.00px;height:12.50px;font-size:9.2px;color:#3e3e3e;-webkit-text-stroke:0.0px #3e3e3e;white-space:pre;line-height:12.50px"><span style="letter-spacing:-0.528px">Д</span><span style="letter-spacing:0.010px">ніпро</span></div>
<div style="left:526.00px;top:362.50px;width:370.00px;height:12.50px;font-size:9.2px;color:#3e3e3e;-webkit-text-stroke:0.0px #3e3e3e;white-space:pre;line-height:12.50px"><span style="letter-spacing:-0.501px">Д</span><span style="letter-spacing:0.037px">ніпропетровська обл., </span><span style="letter-spacing:-0.501px">Д</span><span style="letter-spacing:0.036px">ніпро, вул. </span><span style="letter-spacing:-0.493px">Р</span><span style="letter-spacing:0.038px">обоча 65</span></div>
<svg style="position:absolute;left:961.00px;top:364.20px" width="7" height="7.6" viewBox="0 0 7 7.6"><path d="M0.9 0.45 L6.1 7.15 M6.1 0.45 L0.9 7.15" stroke="#333" stroke-width="1.5"/></svg>
<div style="left:47.50px;top:375.00px;width:400.00px;height:12.50px;font-size:9.2px;color:#3e3e3e;-webkit-text-stroke:0.0px #3e3e3e;white-space:pre;line-height:12.50px"><span style="letter-spacing:-0.520px">В</span><span style="letter-spacing:0.009px">ан </span><span style="letter-spacing:-0.454px">К</span><span style="letter-spacing:0.008px">лінік (</span><span style="letter-spacing:-0.528px">Д</span><span style="letter-spacing:0.010px">обробут </span><span style="letter-spacing:-0.563px">Н</span><span style="letter-spacing:0.007px">ації) </span><span style="letter-spacing:-0.613px">МЦ</span><span style="letter-spacing:0.006px"> (</span><span style="letter-spacing:-0.528px">Д</span><span style="letter-spacing:0.009px">ніпро) вул.</span><span style="letter-spacing:-0.561px">П</span><span style="letter-spacing:0.010px">івнічнодонецька 1</span><span style="letter-spacing:-0.520px">А</span></div>
<div style="left:420.50px;top:375.00px;width:100.00px;height:12.50px;font-size:9.2px;color:#3e3e3e;-webkit-text-stroke:0.0px #3e3e3e;white-space:pre;line-height:12.50px"><span style="letter-spacing:-0.528px">Д</span><span style="letter-spacing:0.010px">ніпро</span></div>
<div style="left:526.00px;top:375.00px;width:370.00px;height:12.50px;font-size:9.2px;color:#3e3e3e;-webkit-text-stroke:0.0px #3e3e3e;white-space:pre;line-height:12.50px"><span style="letter-spacing:-0.498px">Д</span><span style="letter-spacing:0.040px">ніпропетровська обл., </span><span style="letter-spacing:-0.498px">Д</span><span style="letter-spacing:0.039px">ніпро, вул.</span><span style="letter-spacing:-0.530px">П</span><span style="letter-spacing:0.040px">івнічнодонецька 1</span><span style="letter-spacing:-0.490px">А</span></div>
<svg style="position:absolute;left:961.00px;top:376.70px" width="7" height="7.6" viewBox="0 0 7 7.6"><path d="M0.9 0.45 L6.1 7.15 M6.1 0.45 L0.9 7.15" stroke="#333" stroke-width="1.5"/></svg>
<div style="left:47.50px;top:387.50px;width:400.00px;height:12.50px;font-size:9.2px;color:#3e3e3e;-webkit-text-stroke:0.0px #3e3e3e;white-space:pre;line-height:12.50px"><span style="letter-spacing:-0.478px">Д</span><span style="letter-spacing:0.060px">ентал </span><span style="letter-spacing:-0.511px">Є</span><span style="letter-spacing:0.060px">вро </span><span style="letter-spacing:-0.513px">С</span><span style="letter-spacing:0.060px">томатологічний центр</span></div>
<div style="left:420.50px;top:387.50px;width:100.00px;height:12.50px;font-size:9.2px;color:#3e3e3e;-webkit-text-stroke:0.0px #3e3e3e;white-space:pre;line-height:12.50px"><span style="letter-spacing:-0.528px">Д</span><span style="letter-spacing:0.010px">ніпро</span></div>
<div style="left:526.00px;top:387.50px;width:370.00px;height:12.50px;font-size:9.2px;color:#3e3e3e;-webkit-text-stroke:0.0px #3e3e3e;white-space:pre;line-height:12.50px"><span style="letter-spacing:-0.009px">49027, </span><span style="letter-spacing:-0.547px">Д</span><span style="letter-spacing:-0.009px">ніпропетровська обл., </span><span style="letter-spacing:-0.547px">Д</span><span style="letter-spacing:-0.010px">ніпро м., </span><span style="letter-spacing:-0.582px">С</span><span style="letter-spacing:-0.008px">оборна пл., будинок № 9а</span></div>
<svg style="position:absolute;left:961.00px;top:389.20px" width="7" height="7.6" viewBox="0 0 7 7.6"><path d="M0.9 0.45 L6.1 7.15 M6.1 0.45 L0.9 7.15" stroke="#333" stroke-width="1.5"/></svg>
<div style="left:47.50px;top:400.00px;width:400.00px;height:12.50px;font-size:9.2px;color:#3e3e3e;-webkit-text-stroke:0.0px #3e3e3e;white-space:pre;line-height:12.50px"><span style="letter-spacing:-0.588px">Д</span><span style="letter-spacing:-0.050px">ентал </span><span style="letter-spacing:-0.710px">М</span><span style="letter-spacing:-0.050px">едикал </span><span style="letter-spacing:-0.514px">К</span><span style="letter-spacing:-0.052px">лінік</span></div>
<div style="left:420.50px;top:400.00px;width:100.00px;height:12.50px;font-size:9.2px;color:#3e3e3e;-webkit-text-stroke:0.0px #3e3e3e;white-space:pre;line-height:12.50px"><span style="letter-spacing:-0.528px">Д</span><span style="letter-spacing:0.010px">ніпро</span></div>
<div style="left:526.00px;top:400.00px;width:370.00px;height:12.50px;font-size:9.2px;color:#3e3e3e;-webkit-text-stroke:0.0px #3e3e3e;white-space:pre;line-height:12.50px"><span style="letter-spacing:0.034px">49000, </span><span style="letter-spacing:-0.504px">Д</span><span style="letter-spacing:0.034px">ніпропетровська обл., </span><span style="letter-spacing:-0.504px">Д</span><span style="letter-spacing:0.033px">ніпро м., </span><span style="letter-spacing:-0.539px">С</span><span style="letter-spacing:0.035px">імферопольська вул., будинок № 2</span><span style="letter-spacing:-0.430px">К</span></div>
<svg style="position:absolute;left:961.00px;top:401.70px" width="7" height="7.6" viewBox="0 0 7 7.6"><path d="M0.9 0.45 L6.1 7.15 M6.1 0.45 L0.9 7.15" stroke="#333" stroke-width="1.5"/></svg>
<div style="left:47.50px;top:412.50px;width:400.00px;height:12.60px;font-size:9.2px;color:#3e3e3e;-webkit-text-stroke:0.0px #3e3e3e;white-space:pre;line-height:12.60px"><span style="letter-spacing:-0.521px">З</span><span style="letter-spacing:-0.040px">дорове </span><span style="letter-spacing:-0.611px">П</span><span style="letter-spacing:-0.041px">окоління (</span><span style="letter-spacing:-0.584px">ТОВ</span><span style="letter-spacing:-0.044px"> </span><span style="letter-spacing:-0.700px">М</span><span style="letter-spacing:-0.041px">едична клініка </span><span style="letter-spacing:-0.657px">О</span><span style="letter-spacing:-0.040px">лександр)</span></div>
<div style="left:420.50px;top:412.50px;width:100.00px;height:12.60px;font-size:9.2px;color:#3e3e3e;-webkit-text-stroke:0.0px #3e3e3e;white-space:pre;line-height:12.60px"><span style="letter-spacing:-0.528px">Д</span><span style="letter-spacing:0.010px">ніпро</span></div>
<div style="left:526.00px;top:412.50px;width:370.00px;height:12.60px;font-size:9.2px;color:#3e3e3e;-webkit-text-stroke:0.0px #3e3e3e;white-space:pre;line-height:12.60px"><span style="letter-spacing:0.049px">49080, </span><span style="letter-spacing:-0.489px">Д</span><span style="letter-spacing:0.049px">ніпропетровська обл., </span><span style="letter-spacing:-0.489px">Д</span><span style="letter-spacing:0.048px">ніпро м., </span><span style="letter-spacing:-0.489px">Д</span><span style="letter-spacing:0.050px">онецьке шосе вул., будинок № 7</span></div>
<svg style="position:absolute;left:961.00px;top:414.20px" width="7" height="7.6" viewBox="0 0 7 7.6"><path d="M0.9 0.45 L6.1 7.15 M6.1 0.45 L0.9 7.15" stroke="#333" stroke-width="1.5"/></svg>
<div style="left:47.50px;top:425.10px;width:400.00px;height:12.40px;font-size:9.2px;color:#3e3e3e;-webkit-text-stroke:0.0px #3e3e3e;white-space:pre;line-height:12.40px"><span style="letter-spacing:-0.565px">З</span><span style="letter-spacing:-0.083px">дорове </span><span style="letter-spacing:-0.654px">П</span><span style="letter-spacing:-0.084px">окоління </span><span style="letter-spacing:-0.744px">М</span><span style="letter-spacing:-0.084px">едична клініка</span></div>
<div style="left:420.50px;top:425.10px;width:100.00px;height:12.40px;font-size:9.2px;color:#3e3e3e;-webkit-text-stroke:0.0px #3e3e3e;white-space:pre;line-height:12.40px"><span style="letter-spacing:-0.528px">Д</span><span style="letter-spacing:0.010px">ніпро</span></div>
<div style="left:526.00px;top:425.10px;width:370.00px;height:12.40px;font-size:9.2px;color:#3e3e3e;-webkit-text-stroke:0.0px #3e3e3e;white-space:pre;line-height:12.40px"><span style="letter-spacing:0.045px">49000, </span><span style="letter-spacing:-0.493px">Д</span><span style="letter-spacing:0.045px">ніпропетровська обл., </span><span style="letter-spacing:-0.493px">Д</span><span style="letter-spacing:0.044px">ніпро м., </span><span style="letter-spacing:-0.436px">З</span><span style="letter-spacing:0.045px">апорізьке шосе вул., будинок № 38</span></div>
<svg style="position:absolute;left:961.00px;top:426.80px" width="7" height="7.6" viewBox="0 0 7 7.6"><path d="M0.9 0.45 L6.1 7.15 M6.1 0.45 L0.9 7.15" stroke="#333" stroke-width="1.5"/></svg>
<div style="left:47.50px;top:437.50px;width:400.00px;height:12.50px;font-size:9.2px;color:#3e3e3e;-webkit-text-stroke:0.0px #3e3e3e;white-space:pre;line-height:12.50px"><span style="letter-spacing:-0.565px">З</span><span style="letter-spacing:-0.083px">дорове </span><span style="letter-spacing:-0.654px">П</span><span style="letter-spacing:-0.084px">окоління </span><span style="letter-spacing:-0.744px">М</span><span style="letter-spacing:-0.084px">едична клініка</span></div>
<div style="left:420.50px;top:437.50px;width:100.00px;height:12.50px;font-size:9.2px;color:#3e3e3e;-webkit-text-stroke:0.0px #3e3e3e;white-space:pre;line-height:12.50px"><span style="letter-spacing:-0.528px">Д</span><span style="letter-spacing:0.010px">ніпро</span></div>
<div style="left:526.00px;top:437.50px;width:370.00px;height:12.50px;font-size:9.2px;color:#3e3e3e;-webkit-text-stroke:0.0px #3e3e3e;white-space:pre;line-height:12.50px"><span style="letter-spacing:0.044px">49000, </span><span style="letter-spacing:-0.494px">Д</span><span style="letter-spacing:0.044px">ніпропетровська обл., </span><span style="letter-spacing:-0.494px">Д</span><span style="letter-spacing:0.043px">ніпро м., </span><span style="letter-spacing:-0.526px">П</span><span style="letter-spacing:0.044px">ривокзальна вул., будинок № 4</span></div>
<svg style="position:absolute;left:961.00px;top:439.20px" width="7" height="7.6" viewBox="0 0 7 7.6"><path d="M0.9 0.45 L6.1 7.15 M6.1 0.45 L0.9 7.15" stroke="#333" stroke-width="1.5"/></svg>
<div style="left:47.50px;top:450.80px;width:400.00px;height:23.90px;font-size:9.2px;color:#3e3e3e;-webkit-text-stroke:0.0px #3e3e3e;white-space:pre;line-height:23.90px"><span style="letter-spacing:-0.545px">З</span><span style="letter-spacing:-0.064px">дорове </span><span style="letter-spacing:-0.635px">П</span><span style="letter-spacing:-0.065px">окоління </span><span style="letter-spacing:-0.724px">М</span><span style="letter-spacing:-0.065px">едична клініка (</span><span style="letter-spacing:-0.578px">ДНІПРОМЕДІНВЕСТ</span><span style="letter-spacing:-0.069px"> </span><span style="letter-spacing:-0.609px">ТОВ</span><span style="letter-spacing:-0.067px">)</span></div>
<div style="left:420.50px;top:450.80px;width:100.00px;height:23.90px;font-size:9.2px;color:#3e3e3e;-webkit-text-stroke:0.0px #3e3e3e;white-space:pre;line-height:23.90px"><span style="letter-spacing:-0.528px">Д</span><span style="letter-spacing:0.010px">ніпро</span></div>
<div style="left:526.00px;top:451.30px;width:370.00px;height:23.90px;font-size:9.2px;color:#3e3e3e;-webkit-text-stroke:0.0px #3e3e3e;white-space:pre;line-height:10.6px"><span style="letter-spacing:0.050px">49000, </span><span style="letter-spacing:-0.488px">Д</span><span style="letter-spacing:0.050px">ніпропетровська обл., </span><span style="letter-spacing:-0.488px">Д</span><span style="letter-spacing:0.049px">ніпро м., </span><span style="letter-spacing:-0.523px">Н</span><span style="letter-spacing:0.051px">абережна </span><span style="letter-spacing:-0.431px">З</span><span style="letter-spacing:0.051px">аводська вул., будинок № 123</span><br><span style="letter-spacing:-8.112px">Б</span></div>
<svg style="position:absolute;left:961.00px;top:451.70px" width="7" height="7.6" viewBox="0 0 7 7.6"><path d="M0.9 0.45 L6.1 7.15 M6.1 0.45 L0.9 7.15" stroke="#333" stroke-width="1.5"/></svg>
<div style="left:47.50px;top:473.90px;width:400.00px;height:12.50px;font-size:9.2px;color:#3e3e3e;-webkit-text-stroke:0.0px #3e3e3e;white-space:pre;line-height:12.50px"><span style="letter-spacing:-0.155px">І</span><span style="letter-spacing:0.072px">нноваційний лікувально-оздоровчий центр </span><span style="letter-spacing:-0.459px">А</span><span style="letter-spacing:0.071px">ла </span><span style="letter-spacing:-0.459px">А</span><span style="letter-spacing:0.071px">тлантіс</span></div>
<div style="left:420.50px;top:473.90px;width:100.00px;height:12.50px;font-size:9.2px;color:#3e3e3e;-webkit-text-stroke:0.0px #3e3e3e;white-space:pre;line-height:12.50px"><span style="letter-spacing:-0.528px">Д</span><span style="letter-spacing:0.010px">ніпро</span></div>
<div style="left:526.00px;top:473.90px;width:370.00px;height:12.50px;font-size:9.2px;color:#3e3e3e;-webkit-text-stroke:0.0px #3e3e3e;white-space:pre;line-height:12.50px"><span style="letter-spacing:0.035px">49111, </span><span style="letter-spacing:-0.503px">Д</span><span style="letter-spacing:0.035px">ніпропетровська обл., </span><span style="letter-spacing:-0.503px">Д</span><span style="letter-spacing:0.034px">ніпро м., </span><span style="letter-spacing:-0.397px">Г</span><span style="letter-spacing:0.035px">агаріна пр-т, будинок № 165, поверх 2</span></div>
<svg style="position:absolute;left:961.00px;top:475.60px" width="7" height="7.6" viewBox="0 0 7 7.6"><path d="M0.9 0.45 L6.1 7.15 M6.1 0.45 L0.9 7.15" stroke="#333" stroke-width="1.5"/></svg>
<div style="left:47.50px;top:486.40px;width:400.00px;height:12.50px;font-size:9.2px;color:#3e3e3e;-webkit-text-stroke:0.0px #3e3e3e;white-space:pre;line-height:12.50px"><span style="letter-spacing:-0.267px">КЛІНІКА</span><span style="letter-spacing:0.158px"> </span><span style="letter-spacing:-0.340px">ДОВГОЛІТТЯ</span></div>
<div style="left:420.50px;top:486.40px;width:100.00px;height:12.50px;font-size:9.2px;color:#3e3e3e;-webkit-text-stroke:0.0px #3e3e3e;white-space:pre;line-height:12.50px"><span style="letter-spacing:-0.528px">Д</span><span style="letter-spacing:0.010px">ніпро</span></div>
<div style="left:526.00px;top:486.40px;width:370.00px;height:12.50px;font-size:9.2px;color:#3e3e3e;-webkit-text-stroke:0.0px #3e3e3e;white-space:pre;line-height:12.50px"><span style="letter-spacing:0.047px">49101, </span><span style="letter-spacing:-0.491px">Д</span><span style="letter-spacing:0.047px">ніпропетровська обл., </span><span style="letter-spacing:-0.491px">Д</span><span style="letter-spacing:0.046px">ніпро м., </span><span style="letter-spacing:-0.483px">Х</span><span style="letter-spacing:0.047px">ерсонська вул., будинок № 10</span><span style="letter-spacing:-0.483px">А</span></div>
<svg style="position:absolute;left:961.00px;top:488.10px" width="7" height="7.6" viewBox="0 0 7 7.6"><path d="M0.9 0.45 L6.1 7.15 M6.1 0.45 L0.9 7.15" stroke="#333" stroke-width="1.5"/></svg>
<div style="left:47.50px;top:498.90px;width:400.00px;height:12.40px;font-size:9.2px;color:#3e3e3e;-webkit-text-stroke:0.0px #3e3e3e;white-space:pre;line-height:12.40px"><span style="letter-spacing:-0.365px">К</span><span style="letter-spacing:0.097px">лініка </span><span style="letter-spacing:-0.439px">Д</span><span style="letter-spacing:0.098px">овголіття (</span><span style="letter-spacing:-0.439px">Д</span><span style="letter-spacing:0.098px">ніпро) вул. </span><span style="letter-spacing:-0.431px">В</span><span style="letter-spacing:0.100px">олодимира </span><span style="letter-spacing:-0.431px">А</span><span style="letter-spacing:0.100px">нтоновича 29</span></div>
<div style="left:420.50px;top:498.90px;width:100.00px;height:12.40px;font-size:9.2px;color:#3e3e3e;-webkit-text-stroke:0.0px #3e3e3e;white-space:pre;line-height:12.40px"><span style="letter-spacing:-0.528px">Д</span><span style="letter-spacing:0.010px">ніпро</span></div>
<div style="left:526.00px;top:498.90px;width:370.00px;height:12.40px;font-size:9.2px;color:#3e3e3e;-webkit-text-stroke:0.0px #3e3e3e;white-space:pre;line-height:12.40px"><span style="letter-spacing:-0.464px">Д</span><span style="letter-spacing:0.074px">ніпропетровська обл., </span><span style="letter-spacing:-0.464px">Д</span><span style="letter-spacing:0.073px">ніпро, вул. </span><span style="letter-spacing:-0.456px">В</span><span style="letter-spacing:0.075px">олодимира </span><span style="letter-spacing:-0.456px">А</span><span style="letter-spacing:0.075px">нтоновича 29</span></div>
<svg style="position:absolute;left:961.00px;top:500.60px" width="7" height="7.6" viewBox="0 0 7 7.6"><path d="M0.9 0.45 L6.1 7.15 M6.1 0.45 L0.9 7.15" stroke="#333" stroke-width="1.5"/></svg>
<div style="left:47.50px;top:511.30px;width:400.00px;height:12.50px;font-size:9.2px;color:#3e3e3e;-webkit-text-stroke:0.0px #3e3e3e;white-space:pre;line-height:12.50px"><span style="letter-spacing:-0.381px">К</span><span style="letter-spacing:0.082px">лініка </span><span style="letter-spacing:-0.455px">Д</span><span style="letter-spacing:0.083px">овголіття (</span><span style="letter-spacing:-0.455px">Д</span><span style="letter-spacing:0.082px">ніпро) вул. </span><span style="letter-spacing:-0.447px">В</span><span style="letter-spacing:0.085px">олодимира </span><span style="letter-spacing:-0.447px">А</span><span style="letter-spacing:0.084px">нтоновича, 61</span></div>
<div style="left:420.50px;top:511.30px;width:100.00px;height:12.50px;font-size:9.2px;color:#3e3e3e;-webkit-text-stroke:0.0px #3e3e3e;white-space:pre;line-height:12.50px"><span style="letter-spacing:-0.528px">Д</span><span style="letter-spacing:0.010px">ніпро</span></div>
<div style="left:526.00px;top:511.30px;width:370.00px;height:12.50px;font-size:9.2px;color:#3e3e3e;-webkit-text-stroke:0.0px #3e3e3e;white-space:pre;line-height:12.50px"><span style="letter-spacing:-0.475px">Д</span><span style="letter-spacing:0.063px">ніпропетровська обл., </span><span style="letter-spacing:-0.475px">Д</span><span style="letter-spacing:0.062px">ніпро, вул. </span><span style="letter-spacing:-0.467px">В</span><span style="letter-spacing:0.064px">олодимира </span><span style="letter-spacing:-0.467px">А</span><span style="letter-spacing:0.063px">нтоновича, 61</span></div>
<svg style="position:absolute;left:961.00px;top:513.00px" width="7" height="7.6" viewBox="0 0 7 7.6"><path d="M0.9 0.45 L6.1 7.15 M6.1 0.45 L0.9 7.15" stroke="#333" stroke-width="1.5"/></svg>
<div style="left:47.50px;top:523.80px;width:400.00px;height:12.50px;font-size:9.2px;color:#3e3e3e;-webkit-text-stroke:0.0px #3e3e3e;white-space:pre;line-height:12.50px"><span style="letter-spacing:-0.369px">К</span><span style="letter-spacing:0.093px">лініка </span><span style="letter-spacing:-0.443px">Д</span><span style="letter-spacing:0.094px">овголіття (</span><span style="letter-spacing:-0.443px">Д</span><span style="letter-spacing:0.094px">ніпро) вул. </span><span style="letter-spacing:-0.478px">Н</span><span style="letter-spacing:0.095px">езалежності 25</span></div>
<div style="left:420.50px;top:523.80px;width:100.00px;height:12.50px;font-size:9.2px;color:#3e3e3e;-webkit-text-stroke:0.0px #3e3e3e;white-space:pre;line-height:12.50px"><span style="letter-spacing:-0.528px">Д</span><span style="letter-spacing:0.010px">ніпро</span></div>
<div style="left:526.00px;top:523.80px;width:370.00px;height:12.50px;font-size:9.2px;color:#3e3e3e;-webkit-text-stroke:0.0px #3e3e3e;white-space:pre;line-height:12.50px"><span style="letter-spacing:-0.468px">Д</span><span style="letter-spacing:0.070px">ніпропетровська обл., </span><span style="letter-spacing:-0.468px">Д</span><span style="letter-spacing:0.069px">ніпро, вул. </span><span style="letter-spacing:-0.503px">Н</span><span style="letter-spacing:0.070px">езалежності 25</span></div>
<svg style="position:absolute;left:961.00px;top:525.50px" width="7" height="7.6" viewBox="0 0 7 7.6"><path d="M0.9 0.45 L6.1 7.15 M6.1 0.45 L0.9 7.15" stroke="#333" stroke-width="1.5"/></svg>
<div style="left:47.50px;top:536.30px;width:400.00px;height:12.50px;font-size:9.2px;color:#3e3e3e;-webkit-text-stroke:0.0px #3e3e3e;white-space:pre;line-height:12.50px"><span style="letter-spacing:-0.369px">К</span><span style="letter-spacing:0.093px">лініка </span><span style="letter-spacing:-0.443px">Д</span><span style="letter-spacing:0.094px">овголіття (</span><span style="letter-spacing:-0.443px">Д</span><span style="letter-spacing:0.094px">ніпро) вул. </span><span style="letter-spacing:-0.478px">Н</span><span style="letter-spacing:0.095px">езалежності 29</span></div>
<div style="left:420.50px;top:536.30px;width:100.00px;height:12.50px;font-size:9.2px;color:#3e3e3e;-webkit-text-stroke:0.0px #3e3e3e;white-space:pre;line-height:12.50px"><span style="letter-spacing:-0.528px">Д</span><span style="letter-spacing:0.010px">ніпро</span></div>
<div style="left:526.00px;top:536.30px;width:370.00px;height:12.50px;font-size:9.2px;color:#3e3e3e;-webkit-text-stroke:0.0px #3e3e3e;white-space:pre;line-height:12.50px"><span style="letter-spacing:-0.468px">Д</span><span style="letter-spacing:0.070px">ніпропетровська обл., </span><span style="letter-spacing:-0.468px">Д</span><span style="letter-spacing:0.069px">ніпро, вул. </span><span style="letter-spacing:-0.503px">Н</span><span style="letter-spacing:0.070px">езалежності 29</span></div>
<svg style="position:absolute;left:961.00px;top:538.00px" width="7" height="7.6" viewBox="0 0 7 7.6"><path d="M0.9 0.45 L6.1 7.15 M6.1 0.45 L0.9 7.15" stroke="#333" stroke-width="1.5"/></svg>
<div style="left:47.50px;top:548.80px;width:400.00px;height:12.50px;font-size:9.2px;color:#3e3e3e;-webkit-text-stroke:0.0px #3e3e3e;white-space:pre;line-height:12.50px"><span style="letter-spacing:-0.609px">НЕМАЄ</span><span style="letter-spacing:-0.040px"> </span><span style="letter-spacing:-0.519px">СПІВПРАЦІ</span><span style="letter-spacing:-0.040px"> </span><span style="letter-spacing:-0.574px">Д</span><span style="letter-spacing:-0.036px">ніпровська клінічна лікарня на залізничному транспорті</span></div>
<div style="left:420.50px;top:548.80px;width:100.00px;height:12.50px;font-size:9.2px;color:#3e3e3e;-webkit-text-stroke:0.0px #3e3e3e;white-space:pre;line-height:12.50px"><span style="letter-spacing:-0.528px">Д</span><span style="letter-spacing:0.010px">ніпро</span></div>
<div style="left:526.00px;top:548.80px;width:370.00px;height:12.50px;font-size:9.2px;color:#3e3e3e;-webkit-text-stroke:0.0px #3e3e3e;white-space:pre;line-height:12.50px"><span style="letter-spacing:0.058px">49047, </span><span style="letter-spacing:-0.480px">Д</span><span style="letter-spacing:0.058px">ніпропетровська обл., </span><span style="letter-spacing:-0.480px">Д</span><span style="letter-spacing:0.057px">ніпро м., </span><span style="letter-spacing:-0.406px">К</span><span style="letter-spacing:0.059px">едрина вул., будинок № 55</span></div>
<svg style="position:absolute;left:961.00px;top:550.50px" width="7" height="7.6" viewBox="0 0 7 7.6"><path d="M0.9 0.45 L6.1 7.15 M6.1 0.45 L0.9 7.15" stroke="#333" stroke-width="1.5"/></svg>
<div style="left:47.50px;top:561.30px;width:400.00px;height:12.50px;font-size:9.2px;color:#3e3e3e;-webkit-text-stroke:0.0px #3e3e3e;white-space:pre;line-height:12.50px"><span style="letter-spacing:-0.587px">П</span><span style="letter-spacing:-0.017px">рофідент (</span><span style="letter-spacing:-0.555px">Д</span><span style="letter-spacing:-0.018px">ніпро) (</span><span style="letter-spacing:-0.613px">ФОП</span><span style="letter-spacing:-0.021px"> </span><span style="letter-spacing:-0.815px">Ю</span><span style="letter-spacing:-0.016px">щенко)</span></div>
<div style="left:420.50px;top:561.30px;width:100.00px;height:12.50px;font-size:9.2px;color:#3e3e3e;-webkit-text-stroke:0.0px #3e3e3e;white-space:pre;line-height:12.50px"><span style="letter-spacing:-0.528px">Д</span><span style="letter-spacing:0.010px">ніпро</span></div>
<div style="left:526.00px;top:561.30px;width:370.00px;height:12.50px;font-size:9.2px;color:#3e3e3e;-webkit-text-stroke:0.0px #3e3e3e;white-space:pre;line-height:12.50px"><span style="letter-spacing:0.037px">49081, </span><span style="letter-spacing:-0.500px">Д</span><span style="letter-spacing:0.037px">ніпропетровська обл., </span><span style="letter-spacing:-0.500px">Д</span><span style="letter-spacing:0.036px">ніпро м., </span><span style="letter-spacing:-0.536px">С</span><span style="letter-spacing:0.038px">лобожанський  пр-т, будинок № 1</span></div>
<svg style="position:absolute;left:961.00px;top:563.00px" width="7" height="7.6" viewBox="0 0 7 7.6"><path d="M0.9 0.45 L6.1 7.15 M6.1 0.45 L0.9 7.15" stroke="#333" stroke-width="1.5"/></svg>
<div style="left:47.50px;top:573.80px;width:400.00px;height:12.50px;font-size:9.2px;color:#3e3e3e;-webkit-text-stroke:0.0px #3e3e3e;white-space:pre;line-height:12.50px"><span style="letter-spacing:-0.481px">С</span><span style="letter-spacing:0.092px">томатологія </span><span style="letter-spacing:-0.568px">M</span><span style="letter-spacing:0.092px">y</span><span style="letter-spacing:-0.481px">D</span><span style="letter-spacing:0.090px">enta (</span><span style="letter-spacing:-0.568px">М</span><span style="letter-spacing:0.093px">ай</span><span style="letter-spacing:-0.446px">Д</span><span style="letter-spacing:0.091px">ента) </span><span style="letter-spacing:-0.505px">ФОП</span><span style="letter-spacing:0.088px"> </span><span style="letter-spacing:-0.447px">КОВАЛЕНКО</span><span style="letter-spacing:0.088px"> </span><span style="letter-spacing:-0.436px">ГАННА</span><span style="letter-spacing:0.088px"> </span><span style="letter-spacing:-0.381px">ВАЛЕРІЇВНА</span></div>
<div style="left:420.50px;top:573.80px;width:100.00px;height:12.50px;font-size:9.2px;color:#3e3e3e;-webkit-text-stroke:0.0px #3e3e3e;white-space:pre;line-height:12.50px"><span style="letter-spacing:-0.528px">Д</span><span style="letter-spacing:0.010px">ніпро</span></div>
<div style="left:526.00px;top:573.80px;width:370.00px;height:12.50px;font-size:9.2px;color:#3e3e3e;-webkit-text-stroke:0.0px #3e3e3e;white-space:pre;line-height:12.50px"><span style="letter-spacing:0.025px">49000, </span><span style="letter-spacing:-0.513px">Д</span><span style="letter-spacing:0.025px">ніпропетровська обл., </span><span style="letter-spacing:-0.513px">Д</span><span style="letter-spacing:0.024px">ніпро м., </span><span style="letter-spacing:-0.407px">Г</span><span style="letter-spacing:0.025px">рушевського вул., будинок № 6, офіс 1</span></div>
<svg style="position:absolute;left:961.00px;top:575.50px" width="7" height="7.6" viewBox="0 0 7 7.6"><path d="M0.9 0.45 L6.1 7.15 M6.1 0.45 L0.9 7.15" stroke="#333" stroke-width="1.5"/></svg>
<div style="left:47.50px;top:586.30px;width:400.00px;height:12.50px;font-size:9.2px;color:#3e3e3e;-webkit-text-stroke:0.0px #3e3e3e;white-space:pre;line-height:12.50px"><span style="letter-spacing:-0.510px">С</span><span style="letter-spacing:0.063px">томатологія </span><span style="letter-spacing:-0.467px">В</span><span style="letter-spacing:0.062px">ан </span><span style="letter-spacing:-0.401px">К</span><span style="letter-spacing:0.061px">лінік </span><span style="letter-spacing:-0.475px">Д</span><span style="letter-spacing:0.063px">ентал (</span><span style="letter-spacing:-0.534px">ФОП</span><span style="letter-spacing:0.059px"> </span><span style="letter-spacing:-0.401px">К</span><span style="letter-spacing:0.062px">узьміна </span><span style="letter-spacing:-0.510px">Н</span><span style="letter-spacing:0.059px">.</span><span style="letter-spacing:-0.508px">П</span><span style="letter-spacing:0.059px">.)</span></div>
<div style="left:420.50px;top:586.30px;width:100.00px;height:12.50px;font-size:9.2px;color:#3e3e3e;-webkit-text-stroke:0.0px #3e3e3e;white-space:pre;line-height:12.50px"><span style="letter-spacing:-0.528px">Д</span><span style="letter-spacing:0.010px">ніпро</span></div>
<div style="left:526.00px;top:586.30px;width:370.00px;height:12.50px;font-size:9.2px;color:#3e3e3e;-webkit-text-stroke:0.0px #3e3e3e;white-space:pre;line-height:12.50px"><span style="letter-spacing:-0.443px">Д</span><span style="letter-spacing:0.095px">ніпропетровська обл., </span><span style="letter-spacing:-0.443px">Д</span><span style="letter-spacing:0.094px">ніпро м., </span><span style="letter-spacing:-0.435px">А</span><span style="letter-spacing:0.095px">рхітектора </span><span style="letter-spacing:-0.521px">О</span><span style="letter-spacing:0.095px">лега </span><span style="letter-spacing:-0.475px">П</span><span style="letter-spacing:0.096px">етрова вул., будинок № 23</span></div>
<svg style="position:absolute;left:961.00px;top:588.00px" width="7" height="7.6" viewBox="0 0 7 7.6"><path d="M0.9 0.45 L6.1 7.15 M6.1 0.45 L0.9 7.15" stroke="#333" stroke-width="1.5"/></svg>
<div style="left:47.50px;top:598.80px;width:400.00px;height:12.40px;font-size:9.2px;color:#3e3e3e;-webkit-text-stroke:0.0px #3e3e3e;white-space:pre;line-height:12.40px"><span style="letter-spacing:-0.590px">С</span><span style="letter-spacing:-0.017px">томатологія </span><span style="letter-spacing:-0.590px">Н</span><span style="letter-spacing:-0.018px"> +</span></div>
<div style="left:420.50px;top:598.80px;width:100.00px;height:12.40px;font-size:9.2px;color:#3e3e3e;-webkit-text-stroke:0.0px #3e3e3e;white-space:pre;line-height:12.40px"><span style="letter-spacing:-0.528px">Д</span><span style="letter-spacing:0.010px">ніпро</span></div>
<div style="left:526.00px;top:598.80px;width:370.00px;height:12.40px;font-size:9.2px;color:#3e3e3e;-webkit-text-stroke:0.0px #3e3e3e;white-space:pre;line-height:12.40px"><span style="letter-spacing:-0.502px">Д</span><span style="letter-spacing:0.036px">ніпропетровська обл., </span><span style="letter-spacing:-0.502px">Д</span><span style="letter-spacing:0.035px">ніпро м., </span><span style="letter-spacing:-0.494px">Х</span><span style="letter-spacing:0.037px">мельницького </span><span style="letter-spacing:-0.485px">Б</span><span style="letter-spacing:0.037px">огдана бул-р, будинок № 113</span></div>
<svg style="position:absolute;left:961.00px;top:600.50px" width="7" height="7.6" viewBox="0 0 7 7.6"><path d="M0.9 0.45 L6.1 7.15 M6.1 0.45 L0.9 7.15" stroke="#333" stroke-width="1.5"/></svg>
<div style="left:47.50px;top:611.20px;width:400.00px;height:12.50px;font-size:9.2px;color:#3e3e3e;-webkit-text-stroke:0.0px #3e3e3e;white-space:pre;line-height:12.50px"><span style="letter-spacing:-0.549px">С</span><span style="letter-spacing:0.024px">томатологія </span><span style="letter-spacing:-0.549px">Н</span><span style="letter-spacing:0.026px">+</span></div>
<div style="left:420.50px;top:611.20px;width:100.00px;height:12.50px;font-size:9.2px;color:#3e3e3e;-webkit-text-stroke:0.0px #3e3e3e;white-space:pre;line-height:12.50px"><span style="letter-spacing:-0.528px">Д</span><span style="letter-spacing:0.010px">ніпро</span></div>
<div style="left:526.00px;top:611.20px;width:370.00px;height:12.50px;font-size:9.2px;color:#3e3e3e;-webkit-text-stroke:0.0px #3e3e3e;white-space:pre;line-height:12.50px"><span style="letter-spacing:-0.448px">Д</span><span style="letter-spacing:0.090px">ніпропетровська обл., </span><span style="letter-spacing:-0.448px">Д</span><span style="letter-spacing:0.089px">ніпро м., </span><span style="letter-spacing:-0.396px">Т</span><span style="letter-spacing:0.091px">итова вул., будинок № 3</span></div>
<svg style="position:absolute;left:961.00px;top:612.90px" width="7" height="7.6" viewBox="0 0 7 7.6"><path d="M0.9 0.45 L6.1 7.15 M6.1 0.45 L0.9 7.15" stroke="#333" stroke-width="1.5"/></svg>
<div style="left:47.50px;top:623.70px;width:400.00px;height:12.40px;font-size:9.2px;color:#3e3e3e;-webkit-text-stroke:0.0px #3e3e3e;white-space:pre;line-height:12.40px"><span style="letter-spacing:-0.549px">С</span><span style="letter-spacing:0.024px">томатологія </span><span style="letter-spacing:-0.549px">Н</span><span style="letter-spacing:0.026px">+</span></div>
<div style="left:420.50px;top:623.70px;width:100.00px;height:12.40px;font-size:9.2px;color:#3e3e3e;-webkit-text-stroke:0.0px #3e3e3e;white-space:pre;line-height:12.40px"><span style="letter-spacing:-0.528px">Д</span><span style="letter-spacing:0.010px">ніпро</span></div>
<div style="left:526.00px;top:623.70px;width:370.00px;height:12.40px;font-size:9.2px;color:#3e3e3e;-webkit-text-stroke:0.0px #3e3e3e;white-space:pre;line-height:12.40px"><span style="letter-spacing:-0.488px">Д</span><span style="letter-spacing:0.050px">ніпропетровська обл., </span><span style="letter-spacing:-0.488px">Д</span><span style="letter-spacing:0.048px">ніпро м., </span><span style="letter-spacing:-0.610px">М</span><span style="letter-spacing:0.050px">оніторна вул., будинок № 7</span></div>
<svg style="position:absolute;left:961.00px;top:625.40px" width="7" height="7.6" viewBox="0 0 7 7.6"><path d="M0.9 0.45 L6.1 7.15 M6.1 0.45 L0.9 7.15" stroke="#333" stroke-width="1.5"/></svg>
<div style="left:47.50px;top:636.10px;width:400.00px;height:12.50px;font-size:9.2px;color:#3e3e3e;-webkit-text-stroke:0.0px #3e3e3e;white-space:pre;line-height:12.50px"><span style="letter-spacing:-0.549px">С</span><span style="letter-spacing:0.024px">томатологія </span><span style="letter-spacing:-0.549px">Н</span><span style="letter-spacing:0.026px">+</span></div>
<div style="left:420.50px;top:636.10px;width:100.00px;height:12.50px;font-size:9.2px;color:#3e3e3e;-webkit-text-stroke:0.0px #3e3e3e;white-space:pre;line-height:12.50px"><span style="letter-spacing:-0.528px">Д</span><span style="letter-spacing:0.010px">ніпро</span></div>
<div style="left:526.00px;top:636.10px;width:370.00px;height:12.50px;font-size:9.2px;color:#3e3e3e;-webkit-text-stroke:0.0px #3e3e3e;white-space:pre;line-height:12.50px"><span style="letter-spacing:-0.462px">Д</span><span style="letter-spacing:0.076px">ніпропетровська обл., </span><span style="letter-spacing:-0.462px">Д</span><span style="letter-spacing:0.075px">ніпро м., </span><span style="letter-spacing:-0.388px">К</span><span style="letter-spacing:0.077px">алнишевського пр-т, будинок № 36</span></div>
<svg style="position:absolute;left:961.00px;top:637.80px" width="7" height="7.6" viewBox="0 0 7 7.6"><path d="M0.9 0.45 L6.1 7.15 M6.1 0.45 L0.9 7.15" stroke="#333" stroke-width="1.5"/></svg>
<div style="left:47.50px;top:648.60px;width:400.00px;height:12.40px;font-size:9.2px;color:#3e3e3e;-webkit-text-stroke:0.0px #3e3e3e;white-space:pre;line-height:12.40px"><span style="letter-spacing:-0.549px">С</span><span style="letter-spacing:0.024px">томатологія </span><span style="letter-spacing:-0.549px">Н</span><span style="letter-spacing:0.026px">+</span></div>
<div style="left:420.50px;top:648.60px;width:100.00px;height:12.40px;font-size:9.2px;color:#3e3e3e;-webkit-text-stroke:0.0px #3e3e3e;white-space:pre;line-height:12.40px"><span style="letter-spacing:-0.528px">Д</span><span style="letter-spacing:0.010px">ніпро</span></div>
<div style="left:526.00px;top:648.60px;width:370.00px;height:12.40px;font-size:9.2px;color:#3e3e3e;-webkit-text-stroke:0.0px #3e3e3e;white-space:pre;line-height:12.40px"><span style="letter-spacing:-0.439px">Д</span><span style="letter-spacing:0.099px">ніпропетровська обл., </span><span style="letter-spacing:-0.439px">Д</span><span style="letter-spacing:0.098px">ніпро м., </span><span style="letter-spacing:-0.422px">Б</span><span style="letter-spacing:0.100px">єляєва вул., будинок № 8</span></div>
<svg style="position:absolute;left:961.00px;top:650.30px" width="7" height="7.6" viewBox="0 0 7 7.6"><path d="M0.9 0.45 L6.1 7.15 M6.1 0.45 L0.9 7.15" stroke="#333" stroke-width="1.5"/></svg>
<div style="left:47.50px;top:661.00px;width:400.00px;height:12.50px;font-size:9.2px;color:#3e3e3e;-webkit-text-stroke:0.0px #3e3e3e;white-space:pre;line-height:12.50px"><span style="letter-spacing:-0.493px">С</span><span style="letter-spacing:0.080px">томатологія </span><span style="letter-spacing:-0.493px">Н</span><span style="letter-spacing:0.079px">+ («</span><span style="letter-spacing:-0.493px">С</span><span style="letter-spacing:0.080px">томатология для всех»)</span></div>
<div style="left:420.50px;top:661.00px;width:100.00px;height:12.50px;font-size:9.2px;color:#3e3e3e;-webkit-text-stroke:0.0px #3e3e3e;white-space:pre;line-height:12.50px"><span style="letter-spacing:-0.528px">Д</span><span style="letter-spacing:0.010px">ніпро</span></div>
<div style="left:526.00px;top:661.00px;width:370.00px;height:12.50px;font-size:9.2px;color:#3e3e3e;-webkit-text-stroke:0.0px #3e3e3e;white-space:pre;line-height:12.50px"><span style="letter-spacing:-0.497px">Д</span><span style="letter-spacing:0.040px">ніпропетровська обл., </span><span style="letter-spacing:-0.497px">Д</span><span style="letter-spacing:0.039px">ніпро м., </span><span style="letter-spacing:-0.424px">К</span><span style="letter-spacing:0.040px">нягині </span><span style="letter-spacing:-0.576px">О</span><span style="letter-spacing:0.040px">льги вул., будинок № 3</span><span style="letter-spacing:-0.481px">Б</span></div>
<svg style="position:absolute;left:961.00px;top:662.70px" width="7" height="7.6" viewBox="0 0 7 7.6"><path d="M0.9 0.45 L6.1 7.15 M6.1 0.45 L0.9 7.15" stroke="#333" stroke-width="1.5"/></svg>
<div style="left:47.50px;top:673.50px;width:400.00px;height:12.50px;font-size:9.2px;color:#3e3e3e;-webkit-text-stroke:0.0px #3e3e3e;white-space:pre;line-height:12.50px"><span style="letter-spacing:-0.547px">С</span><span style="letter-spacing:0.026px">томатологія </span><span style="letter-spacing:-0.547px">Н</span><span style="letter-spacing:0.025px">+ («</span><span style="letter-spacing:-0.547px">С</span><span style="letter-spacing:0.027px">томатология </span><span style="letter-spacing:-0.547px">Н</span><span style="letter-spacing:0.025px"> +» )</span></div>
<div style="left:420.50px;top:673.50px;width:100.00px;height:12.50px;font-size:9.2px;color:#3e3e3e;-webkit-text-stroke:0.0px #3e3e3e;white-space:pre;line-height:12.50px"><span style="letter-spacing:-0.528px">Д</span><span style="letter-spacing:0.010px">ніпро</span></div>
<div style="left:526.00px;top:673.50px;width:370.00px;height:12.50px;font-size:9.2px;color:#3e3e3e;-webkit-text-stroke:0.0px #3e3e3e;white-space:pre;line-height:12.50px"><span style="letter-spacing:-0.476px">Д</span><span style="letter-spacing:0.062px">ніпропетровська обл., </span><span style="letter-spacing:-0.476px">Д</span><span style="letter-spacing:0.061px">ніпро м., </span><span style="letter-spacing:-0.468px">В</span><span style="letter-spacing:0.063px">олодимира </span><span style="letter-spacing:-0.468px">А</span><span style="letter-spacing:0.062px">нтоновича вул., будинок № 36</span></div>
<svg style="position:absolute;left:961.00px;top:675.20px" width="7" height="7.6" viewBox="0 0 7 7.6"><path d="M0.9 0.45 L6.1 7.15 M6.1 0.45 L0.9 7.15" stroke="#333" stroke-width="1.5"/></svg>
<div style="left:47.50px;top:686.00px;width:400.00px;height:12.50px;font-size:9.2px;color:#3e3e3e;-webkit-text-stroke:0.0px #3e3e3e;white-space:pre;line-height:12.50px"><span style="letter-spacing:-0.549px">С</span><span style="letter-spacing:0.024px">томатологія </span><span style="letter-spacing:-0.549px">Н</span><span style="letter-spacing:0.023px">+ («</span><span style="letter-spacing:-0.549px">С</span><span style="letter-spacing:0.025px">томатология </span><span style="letter-spacing:-0.549px">Н</span><span style="letter-spacing:0.023px">+ </span><span style="letter-spacing:-0.546px">П</span><span style="letter-spacing:0.025px">ремиум»)</span></div>
<div style="left:420.50px;top:686.00px;width:100.00px;height:12.50px;font-size:9.2px;color:#3e3e3e;-webkit-text-stroke:0.0px #3e3e3e;white-space:pre;line-height:12.50px"><span style="letter-spacing:-0.528px">Д</span><span style="letter-spacing:0.010px">ніпро</span></div>
<div style="left:526.00px;top:686.00px;width:370.00px;height:12.50px;font-size:9.2px;color:#3e3e3e;-webkit-text-stroke:0.0px #3e3e3e;white-space:pre;line-height:12.50px"><span style="letter-spacing:-0.428px">Д</span><span style="letter-spacing:0.110px">ніпропетровська обл., </span><span style="letter-spacing:-0.428px">Д</span><span style="letter-spacing:0.108px">ніпро м., </span><span style="letter-spacing:-0.420px">В</span><span style="letter-spacing:0.110px">асиля </span><span style="letter-spacing:-0.620px">Ж</span><span style="letter-spacing:0.110px">уковського вул., будинок № 20</span></div>
<svg style="position:absolute;left:961.00px;top:687.70px" width="7" height="7.6" viewBox="0 0 7 7.6"><path d="M0.9 0.45 L6.1 7.15 M6.1 0.45 L0.9 7.15" stroke="#333" stroke-width="1.5"/></svg>
<div style="left:47.50px;top:698.50px;width:400.00px;height:12.50px;font-size:9.2px;color:#3e3e3e;-webkit-text-stroke:0.0px #3e3e3e;white-space:pre;line-height:12.50px"><span style="letter-spacing:-0.528px">С</span><span style="letter-spacing:0.045px">томатологія </span><span style="letter-spacing:-0.528px">Н</span><span style="letter-spacing:0.044px">+ («</span><span style="letter-spacing:-0.528px">С</span><span style="letter-spacing:0.046px">томатология </span><span style="letter-spacing:-0.528px">Н</span><span style="letter-spacing:0.045px">+»)</span></div>
<div style="left:420.50px;top:698.50px;width:100.00px;height:12.50px;font-size:9.2px;color:#3e3e3e;-webkit-text-stroke:0.0px #3e3e3e;white-space:pre;line-height:12.50px"><span style="letter-spacing:-0.528px">Д</span><span style="letter-spacing:0.010px">ніпро</span></div>
<div style="left:526.00px;top:698.50px;width:370.00px;height:12.50px;font-size:9.2px;color:#3e3e3e;-webkit-text-stroke:0.0px #3e3e3e;white-space:pre;line-height:12.50px"><span style="letter-spacing:-0.500px">Д</span><span style="letter-spacing:0.038px">ніпропетровська обл., </span><span style="letter-spacing:-0.500px">Д</span><span style="letter-spacing:0.037px">ніпро м., </span><span style="letter-spacing:-0.535px">Н</span><span style="letter-spacing:0.039px">абережна </span><span style="letter-spacing:-0.532px">П</span><span style="letter-spacing:0.039px">еремоги вул., будинок № 58</span></div>
<svg style="position:absolute;left:961.00px;top:700.20px" width="7" height="7.6" viewBox="0 0 7 7.6"><path d="M0.9 0.45 L6.1 7.15 M6.1 0.45 L0.9 7.15" stroke="#333" stroke-width="1.5"/></svg>
<div style="left:37.20px;top:93.20px;width:300.00px;height:16.90px;font-weight:bold;font-size:11.9px;line-height:17px;color:#333">Область</div>
<div style="left:37.00px;top:109.90px;width:300.00px;height:14.10px;font-size:10.6px;line-height:14px;color:#4a4a4a">ЛПУ</div>
<div style="left:421.00px;top:109.90px;width:100.00px;height:14.10px;font-size:10.6px;line-height:14px;color:#4a4a4a">Місто</div>
<div style="left:526.00px;top:109.90px;width:100.00px;height:14.10px;font-size:10.6px;line-height:14px;color:#4a4a4a">Адреса</div>
<div style="left:905.80px;top:95.60px;width:114.00px;height:30.00px;font-size:10.6px;line-height:12.8px;color:#4a4a4a;text-align:center">Стоматологічна<br>допомога</div>
</body></html>
